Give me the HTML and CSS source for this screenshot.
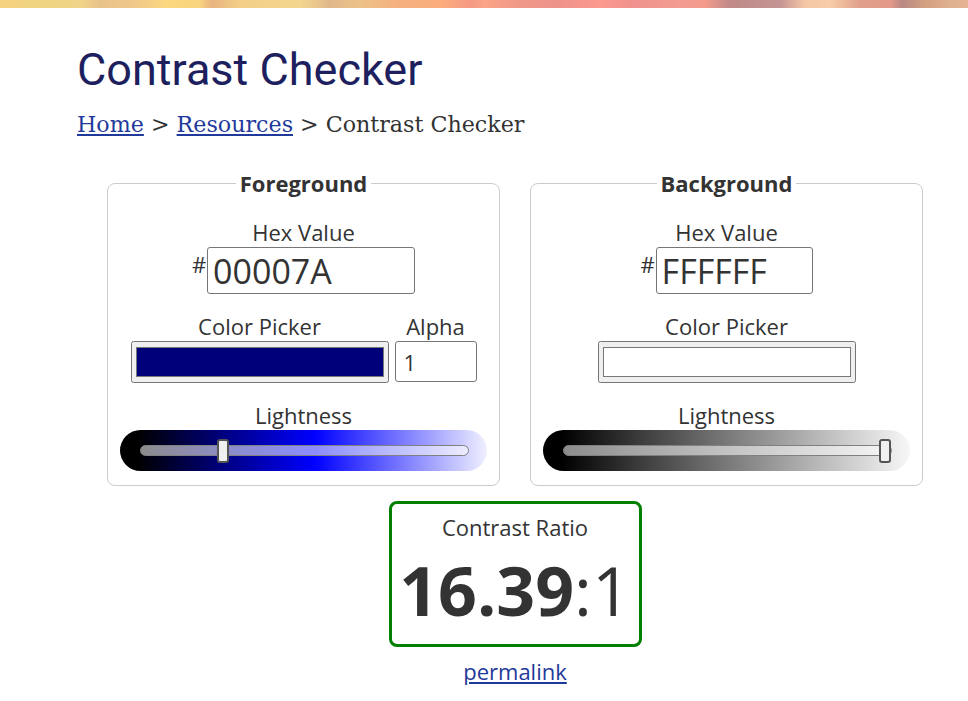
FILE: index.html
```html
<!DOCTYPE html>
<html lang="en">
<head>
<meta charset="utf-8">
<title>Contrast Checker</title>
<link rel="stylesheet" href="styles.css">
</head>
<body>
<div class="topbar"></div>
<main class="page">
  <h1 class="title">Contrast Checker</h1>
  <nav class="crumbs"><a href="#">Home</a> &gt; <a href="#">Resources</a> &gt; Contrast Checker</nav>

  <div class="tool">
    <div class="pickers">
      <fieldset class="panel">
        <legend class="legend">Foreground</legend>
        <div class="panel-body">
          <div class="field">
            <label class="label" for="fg-hex">Hex Value</label>
            <div class="hex-row">
              <span class="hash">#</span>
              <input id="fg-hex" class="hex hex-fg" type="text" value="00007A">
            </div>
          </div>
          <div class="picker-row">
            <div class="field">
              <label class="label" for="fg-color">Color Picker</label>
              <input id="fg-color" class="color" type="color" value="#00007a">
            </div>
            <div class="field">
              <label class="label" for="fg-alpha">Alpha</label>
              <input id="fg-alpha" class="alpha" type="text" value="1">
            </div>
          </div>
          <div class="field field-wide">
            <label class="label" for="fg-light">Lightness</label>
            <div class="slider slider-fg">
              <input id="fg-light" class="range" type="range" min="0" max="100" value="24">
            </div>
          </div>
        </div>
      </fieldset>

      <fieldset class="panel">
        <legend class="legend">Background</legend>
        <div class="panel-body">
          <div class="field">
            <label class="label" for="bg-hex">Hex Value</label>
            <div class="hex-row">
              <span class="hash">#</span>
              <input id="bg-hex" class="hex hex-bg" type="text" value="FFFFFF">
            </div>
          </div>
          <div class="picker-row">
            <div class="field">
              <label class="label" for="bg-color">Color Picker</label>
              <input id="bg-color" class="color" type="color" value="#ffffff">
            </div>
          </div>
          <div class="field field-wide">
            <label class="label" for="bg-light">Lightness</label>
            <div class="slider slider-bg">
              <input id="bg-light" class="range" type="range" min="0" max="100" value="100">
            </div>
          </div>
        </div>
      </fieldset>
    </div>

    <div class="result">
      <div class="ratio-box">
        <div class="ratio-label">Contrast Ratio</div>
        <div class="ratio"><b class="ratio-num">16.39</b>:1</div>
      </div>
      <a class="permalink" href="#">permalink</a>
    </div>
  </div>
</main>
</body>
</html>
```

FILE: styles.css
```css
* { box-sizing: border-box; }

html, body {
  margin: 0;
  background: #fff;
}

body {
  font-family: "Open Sans", "Noto Sans", sans-serif;
  color: #333;
}

.topbar {
  height: 8px;
  background: linear-gradient(to right,
    #f6d27e 0px, #eed584 50px, #f1d489 80px, #e8c38a 100px, #efc88a 135px,
    #fbd780 165px, #f8d47e 200px, #e8b37f 212px, #f3cf88 240px, #f4d68f 300px,
    #dfb88a 330px, #edc188 360px, #f6b080 400px, #fbae7c 440px, #f59a84 470px,
    #fba486 484px, #f09888 520px, #ee928a 560px, #fc9a8e 600px, #f0918e 630px,
    #f29b90 680px, #f59a8c 705px, #bf8a88 730px, #c49494 780px, #f5c7a5 805px,
    #f8cca8 830px, #e0a08c 860px, #e49a88 890px, #b98884 902px, #d2a080 925px,
    #dfb090 950px, #e4b494 968px);
}

.page {
  padding: 0 16px 40px 77px;
}

.title {
  margin: 35px 0 0;
  font-family: Roboto, "Liberation Sans", sans-serif;
  font-weight: 400;
  font-size: 45px;
  line-height: 53px;
  color: #1d1f5e;
}

.crumbs {
  margin-top: 15px;
  font-family: "DejaVu Serif", "Liberation Serif", serif;
  font-size: 22.2px;
  line-height: 26px;
  color: #333;
}

.crumbs a {
  color: #1f3a9b;
  text-decoration: underline;
}

.tool {
  width: 816px;
  margin: 31px 0 0 30px;
}

.pickers {
  display: grid;
  grid-template-columns: 393px 393px;
  column-gap: 30px;
}

.panel {
  margin: 0;
  min-width: 0;
  padding: 0 12px 14px;
  border: 1px solid #ccc;
  border-radius: 8px;
}

.legend {
  margin: 0 auto;
  padding: 0 4px;
  font-weight: 700;
  font-size: 22px;
  line-height: 30px;
  color: #333;
}

.panel-body {
  display: flex;
  flex-direction: column;
  align-items: center;
  gap: 17px;
  padding-top: 19px;
}

.field {
  display: flex;
  flex-direction: column;
  align-items: center;
}

.field-wide {
  align-self: stretch;
  align-items: stretch;
}

.label {
  display: block;
  font-size: 22px;
  line-height: 30px;
  text-align: center;
  color: #333;
}

.hex-row {
  display: flex;
  align-items: flex-start;
}

.hash {
  font-size: 22px;
  line-height: 30px;
  margin-top: 2px;
  padding-right: 1px;
}

.hex {
  height: 47px;
  margin: 0;
  padding: 0 5px;
  border: 1px solid #767676;
  border-radius: 3px;
  font-family: "Open Sans", "Noto Sans", sans-serif;
  font-size: 34px;
  color: #333;
  background: #fff;
}

.hex-fg { width: 208px; }
.hex-bg { width: 157px; }

.picker-row {
  display: flex;
  align-items: flex-start;
  gap: 6px;
}

.color {
  width: 258px;
  height: 42px;
  margin: 0;
}

.alpha {
  width: 82px;
  height: 41px;
  margin: 0;
  padding: 0 8px;
  border: 1px solid #767676;
  border-radius: 3px;
  font-family: "Open Sans", "Noto Sans", sans-serif;
  font-size: 22px;
  color: #333;
  background: #fff;
}

.slider {
  height: 41px;
  border-radius: 21px;
  padding: 0 18px 0 20px;
  display: flex;
  align-items: center;
}

.slider-fg {
  background: linear-gradient(to right,
    hsl(240, 100%, 0%) 0%,
    hsl(240, 100%, 0%) 5%,
    hsl(240, 100%, 25%) 28%,
    hsl(240, 100%, 50%) 53%,
    hsl(240, 100%, 75%) 78%,
    hsl(240, 100%, 97%) 100%);
}

.slider-bg {
  background: linear-gradient(to right,
    #000 0%, #000 5%, #404040 28%, #808080 53%, #c0c0c0 78%, #f7f7f7 100%);
}

.range {
  -webkit-appearance: none;
  appearance: none;
  width: 100%;
  height: 41px;
  margin: 0;
  background: transparent;
}

.range::-webkit-slider-runnable-track {
  height: 11px;
  box-sizing: border-box;
  background: rgba(255, 255, 255, 0.55);
  border: 1px solid #808080;
  border-radius: 6px;
}

.range::-webkit-slider-thumb {
  -webkit-appearance: none;
  appearance: none;
  box-sizing: border-box;
  width: 12px;
  height: 24px;
  margin-top: -7.5px;
  background: #efefef;
  border: 2px solid #555;
  border-radius: 3px;
}

.result {
  display: flex;
  flex-direction: column;
  align-items: center;
  margin-top: 15px;
}

.ratio-box {
  width: 253px;
  height: 146px;
  border: 3px solid #008000;
  border-radius: 8px;
  padding-top: 8px;
  text-align: center;
}

.ratio-label {
  font-size: 22px;
  line-height: 30px;
}

.ratio {
  margin-top: 14px;
  font-size: 68px;
  line-height: 68px;
  color: #333;
}

.ratio-num {
  font-weight: 700;
}

.permalink {
  margin-top: 9px;
  font-size: 22px;
  line-height: 30px;
  color: #1f3a9b;
  text-decoration: underline;
}
```
